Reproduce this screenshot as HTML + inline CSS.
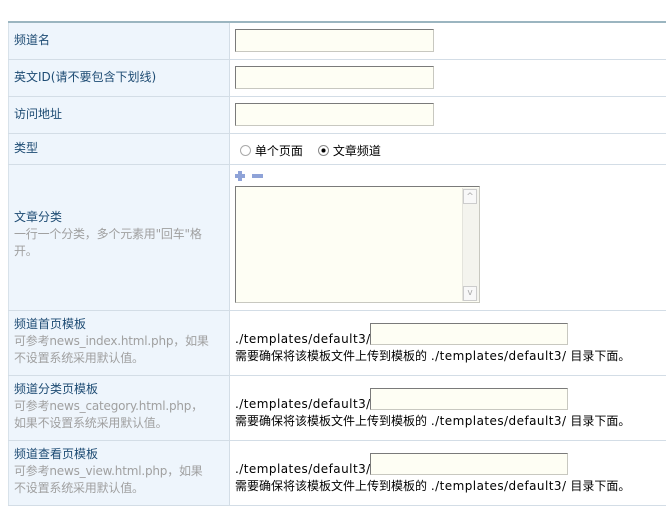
<!DOCTYPE html>
<html><head><meta charset="utf-8"><style>
body{margin:0;width:666px;height:515px;background:#fff;font-family:"DejaVu Sans","Noto Sans CJK SC",sans-serif;font-size:12px;position:relative;overflow:hidden}
.a{position:absolute}
.l{position:absolute;left:8px;width:221px;background:#eef5fc;border-left:1px solid #d8e2ea;box-sizing:border-box}
.h{position:absolute;left:8px;width:658px;height:1px;background:#d3dde6}
.t{position:absolute;left:14px;color:#1d4b73;line-height:17px;white-space:nowrap}
.g{color:#a0a0a0;letter-spacing:-0.2px}
.in{position:absolute;background:#fefef4;border:1px solid #c8c8c0;border-top-color:#7a7a7a;border-left-color:#7a7a7a;box-sizing:border-box}
.r{position:absolute;color:#000;line-height:17px;white-space:nowrap}
.p{letter-spacing:0.45px}
</style></head><body>
<div class="l" style="top:21px;height:484px"></div>
<div class="a" style="left:229px;top:21px;width:1px;height:484px;background:#d3dde6"></div>
<div class="a" style="left:8px;top:21px;width:658px;height:2px;background:#9bb5c0"></div>
<div class="h" style="top:59px"></div><div class="h" style="top:96px"></div><div class="h" style="top:133px"></div><div class="h" style="top:164px"></div><div class="h" style="top:310px"></div><div class="h" style="top:375px"></div><div class="h" style="top:440px"></div><div class="h" style="top:505px"></div>
<div class="t" style="top:32px">频道名</div>
<div class="t" style="top:69px">英文ID(请不要包含下划线)</div>
<div class="t" style="top:106px">访问地址</div>
<div class="t" style="top:140px">类型</div>
<div class="t" style="top:209px">文章分类<br><span class="g">一行一个分类，多个元素用"回车"格<br>开。</span></div>
<div class="t" style="top:316px">频道首页模板<br><span class="g">可参考news_index.html.php，如果<br>不设置系统采用默认值。</span></div>
<div class="t" style="top:381px">频道分类页模板<br><span class="g">可参考news_category.html.php，<br>如果不设置系统采用默认值。</span></div>
<div class="t" style="top:446px">频道查看页模板<br><span class="g">可参考news_view.html.php，如果<br>不设置系统采用默认值。</span></div>
<div class="in" style="left:235px;top:29px;width:199px;height:23px"></div>
<div class="in" style="left:235px;top:66px;width:199px;height:23px"></div>
<div class="in" style="left:235px;top:103px;width:199px;height:23px"></div>
<div class="r" style="left:240px;top:143px"><span style="display:inline-block;width:9px;height:9px;border:1px solid #aaa;border-radius:50%;vertical-align:-1px;background:#fff"></span> 单个页面 &nbsp;&nbsp;&nbsp;<span style="display:inline-block;width:9px;height:9px;border:1px solid #888;border-radius:50%;vertical-align:-1px;background:radial-gradient(#000 30%,#fff 35%)"></span> 文章频道</div>
<div class="a" style="left:235px;top:171px;width:10px;height:10px;background:linear-gradient(#8fa3d8,#8fa3d8) 3px 0/4px 10px no-repeat,linear-gradient(#8fa3d8,#8fa3d8) 0 3px/10px 4px no-repeat"></div>
<div class="a" style="left:252px;top:174px;width:11px;height:4px;background:#8fa3d8"></div>
<div class="in" style="left:235px;top:186px;width:245px;height:117px"></div>
<div class="a" style="left:462px;top:188px;width:16px;height:113px;background:#f4f4ee;border-left:1px solid #e4e4dc"></div>
<div class="a" style="left:463px;top:189px;width:14px;height:15px;border:1px solid #ccc;background:#f8f8f8;box-sizing:border-box;color:#aaa;font-size:9px;text-align:center;line-height:14px">^</div>
<div class="a" style="left:463px;top:286px;width:14px;height:15px;border:1px solid #ccc;background:#f8f8f8;box-sizing:border-box;color:#aaa;font-size:9px;text-align:center;line-height:12px">v</div>

<div class="r p" style="left:235px;top:331px">./templates/default3/</div>
<div class="in" style="left:370px;top:323px;width:198px;height:22px"></div>
<div class="r" style="left:235px;top:348px">需要确保将该模板文件上传到模板的 <span class="p">./templates/default3/</span> 目录下面。</div>

<div class="r p" style="left:235px;top:396px">./templates/default3/</div>
<div class="in" style="left:370px;top:388px;width:198px;height:22px"></div>
<div class="r" style="left:235px;top:413px">需要确保将该模板文件上传到模板的 <span class="p">./templates/default3/</span> 目录下面。</div>

<div class="r p" style="left:235px;top:461px">./templates/default3/</div>
<div class="in" style="left:370px;top:453px;width:198px;height:22px"></div>
<div class="r" style="left:235px;top:478px">需要确保将该模板文件上传到模板的 <span class="p">./templates/default3/</span> 目录下面。</div>
</body></html>
